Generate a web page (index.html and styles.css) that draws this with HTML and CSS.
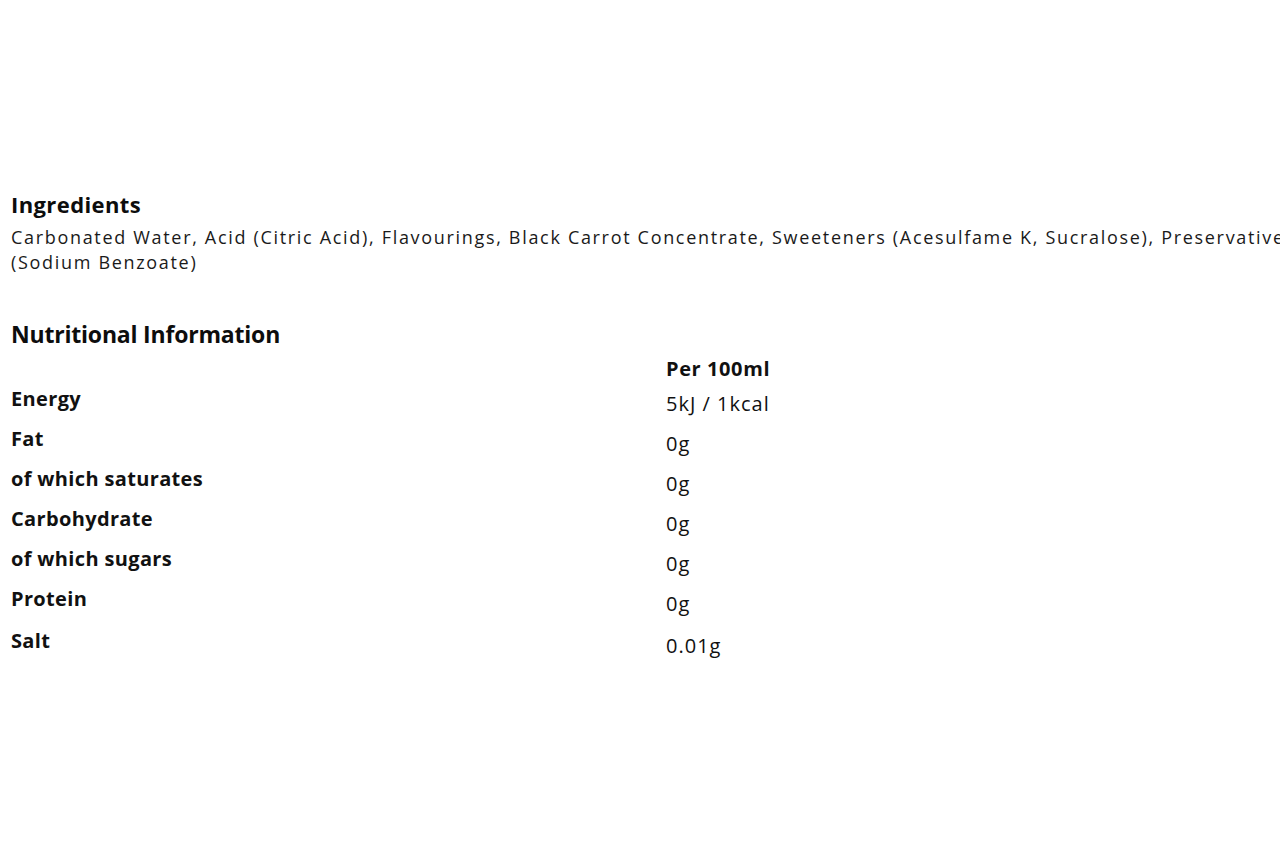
FILE: index.html
```html
<!DOCTYPE html>
<html lang="en">
<head>
<meta charset="utf-8">
<title>Product information</title>
<link rel="stylesheet" href="styles.css">
</head>
<body>
<div class="page">
  <section class="ingredients">
    <h3 class="heading">Ingredients</h3>
    <p class="ingredients-text">Carbonated Water, Acid (Citric Acid), Flavourings, Black Carrot Concentrate, Sweeteners (Acesulfame K, Sucralose), Preservative (Sodium Benzoate)</p>
  </section>
  <section class="nutrition">
    <h3 class="heading heading-lg">Nutritional Information</h3>
    <div class="nutri-table">
      <div class="row row-head"><span class="label"></span><span class="value value-head">Per 100ml</span></div>
      <div class="row"><span class="label">Energy</span><span class="value">5kJ / 1kcal</span></div>
      <div class="row"><span class="label">Fat</span><span class="value">0g</span></div>
      <div class="row"><span class="label">of which saturates</span><span class="value">0g</span></div>
      <div class="row"><span class="label">Carbohydrate</span><span class="value">0g</span></div>
      <div class="row"><span class="label">of which sugars</span><span class="value">0g</span></div>
      <div class="row"><span class="label">Protein</span><span class="value">0g</span></div>
      <div class="row row-last"><span class="label">Salt</span><span class="value">0.01g</span></div>
    </div>
  </section>
</div>
</body>
</html>
```
FILE: styles.css
```css
html, body {
  margin: 0;
  padding: 0;
  background: #ffffff;
  overflow: hidden;
}
body {
  font-family: "Open Sans", "Liberation Sans", sans-serif;
  color: #111111;
}
.page {
  width: 1310px;
  padding: 191px 0 0 11px;
}
.heading {
  margin: 0;
  font-size: 22px;
  font-weight: 700;
  line-height: 26px;
  letter-spacing: 0.4px;
  color: #0d0d0d;
}
.heading-lg {
  font-size: 23px;
  letter-spacing: -0.2px;
}
.ingredients-text {
  margin: 8px 0 0;
  font-size: 18px;
  font-weight: 500;
  line-height: 25px;
  letter-spacing: 1.68px;
  color: #1a1a1a;
}
.nutrition {
  margin-top: 46px;
}
.nutri-table {
  display: flex;
  flex-direction: column;
  margin-top: 10px;
}
.row {
  display: grid;
  grid-template-columns: 655px 1fr;
  height: 40px;
  align-items: start;
}
.row-head {
  height: 30px;
}
.row-last {
  margin-top: 2px;
}
.label {
  font-size: 20px;
  font-weight: 700;
  line-height: 24px;
  letter-spacing: 0.35px;
}
.value {
  font-size: 20px;
  font-weight: 500;
  line-height: 24px;
  letter-spacing: 1px;
  padding-top: 5px;
}
.value-head {
  font-weight: 700;
  letter-spacing: 0.6px;
  padding-top: 0;
}
```
